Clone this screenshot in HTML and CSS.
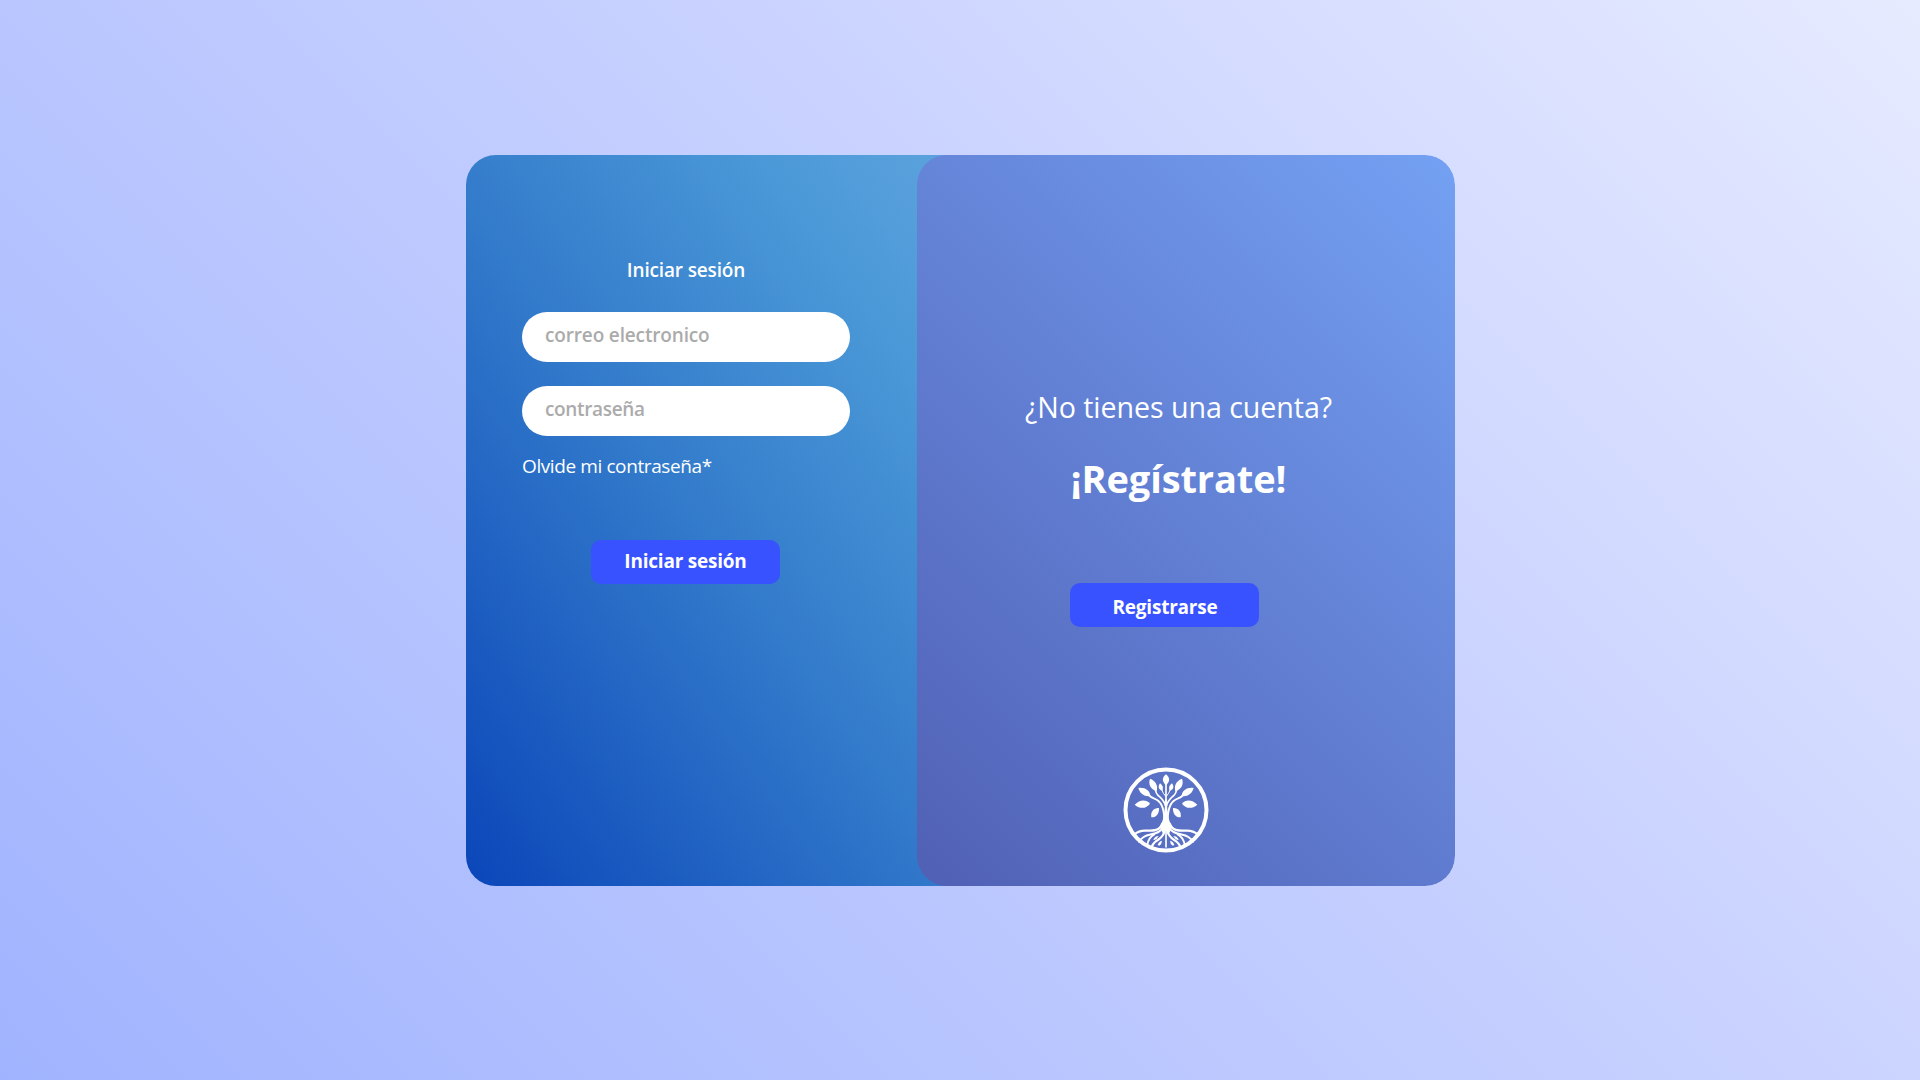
FILE: index.html
```html
<!DOCTYPE html>
<html lang="es">
<head>
<meta charset="utf-8">
<title>Iniciar sesión</title>
<link rel="stylesheet" href="styles.css">
</head>
<body>
<main class="card">
  <form class="login">
    <h1 class="login-title">Iniciar sesión</h1>
    <input class="field" type="text" placeholder="correo electronico">
    <input class="field field-password" type="text" placeholder="contraseña">
    <a class="forgot">Olvide mi contraseña*</a>
    <button class="btn btn-login" type="button">Iniciar sesión</button>
  </form>
  <section class="register">
    <p class="question">¿No tienes una cuenta?</p>
    <h2 class="headline">¡Regístrate!</h2>
    <button class="btn btn-register" type="button">Registrarse</button>
    <svg class="logo" viewBox="0 0 258 258" fill="none" stroke="#fff" stroke-linecap="round">
      <defs>
        <g id="half">
          <!-- branches -->
          <path d="M124 160C124 122 112 101 94 95Q84 92 76 83" stroke-width="6"/>
          <path d="M127 116C123 98 112 92 105 85Q99 79 97 68" stroke-width="5"/>
          <path d="M128 88Q120 80 116 68" stroke-width="3"/>
          <!-- leaves -->
          <g fill="#fff" stroke="none">
            <path d="M81 110C70 96 50 97 35 113C52 127 70 125 81 110Z"/>
            <path d="M82 87C81 69 64 60 46 63C51 81 66 90 82 87Z"/>
            <path d="M101 72C106 55 97 41 81 35C75 51 83 68 101 72Z"/>
            <path d="M118 72C122 61 118 54 111 49C104 58 106 68 118 72Z"/>
            <path d="M108 123C92 122 82 134 85 151C100 152 109 140 108 123Z"/>
          </g>
          <!-- roots -->
          <path d="M118 170C110 193 88 191 66 191Q47 191 33 203" stroke-width="7"/>
          <path d="M120 181C108 205 78 198 62 210Q53 216 48 224" stroke-width="6"/>
          <path d="M94 202C82 208 75 218 72 236" stroke-width="5.5"/>
          <path d="M125 190C121 214 106 216 96 225Q90 230 86 240" stroke-width="6.5"/>
          <path d="M91 218Q95 208 107 207Q103 216 94 219Z" fill="#fff" stroke="none"/>
          <path d="M104 234Q107 223 117 221Q117 230 109 236Z" fill="#fff" stroke="none"/>
        </g>
      </defs>
      <circle cx="129" cy="129" r="121.500" stroke-width="12"/>
      <path d="M129 50V240" stroke-width="5"/>
      <path d="M127 96H131C133 135 135 161 148 178L138 200Q131 196 129 186Q127 196 120 200L110 178C123 161 125 135 127 96Z" fill="#fff" stroke="none"/>
      <path d="M129 55C116 43 117 32 129 22C141 32 142 43 129 55Z" fill="#fff" stroke="none"/>
      <use href="#half"/>
      <use href="#half" transform="matrix(-1 0 0 1 258 0)"/>
    </svg>
  </section>
</main>
</body>
</html>
```

FILE: styles.css
```css
* {
  box-sizing: border-box;
  margin: 0;
}

body {
  height: 100vh;
  padding: 155px 0 0 466px;
  font-family: "Segoe UI", "Open Sans", "Noto Sans", sans-serif;
  color: #fff;
  background: linear-gradient(45deg, #a0b3fe, #cbd4ff 63%, #e6ebff);
}

.card {
  display: flex;
  justify-content: space-between;
  width: 989px;
  height: 731px;
  border-radius: 30px;
  overflow: hidden;
  background: linear-gradient(to top right, #0b46b9, #337bcb 47%, #4a98d7 77%, #60a5df) left / 530px 100% no-repeat;
}

.login {
  display: flex;
  flex-direction: column;
  width: 440px;
  padding: 102px 56px 0;
}

.login-title {
  align-self: center;
  font-size: 19px;
  font-weight: 600;
  line-height: 26px;
  letter-spacing: -0.15px;
}

.field {
  height: 50px;
  margin-top: 29px;
  padding: 10px 23px 14px;
  border: 0;
  border-radius: 25px;
  background: #fff;
  font: 600 19px/26px "Segoe UI", "Open Sans", "Noto Sans", sans-serif;
  letter-spacing: -0.15px;
}

.field-password {
  margin-top: 24px;
  letter-spacing: -0.35px;
}

.field::placeholder {
  color: #ababab;
}

.forgot {
  margin-top: 17px;
  font-size: 19px;
  line-height: 26px;
  letter-spacing: -0.4px;
}

.btn {
  width: 189px;
  height: 44px;
  border: 0;
  border-radius: 10px;
  background: #3852ff;
  color: #fff;
  font: 700 19px/26px "Segoe UI", "Open Sans", "Noto Sans", sans-serif;
  letter-spacing: -0.22px;
}

.btn-login {
  align-self: center;
  margin: 61px 1px 0 0;
  padding: 8px 0 10px;
}

.register {
  display: flex;
  flex-direction: column;
  align-items: center;
  width: 538px;
  padding: 232px 41px 0 0;
  border-radius: 30px;
  background: linear-gradient(45deg, #5060b4, #6280d4 50%, #74a1f3);
}

.question {
  margin-left: 26px;
  font-size: 28.6px;
  line-height: 39px;
  letter-spacing: -0.05px;
}

.headline {
  margin: 26px 0 0 26px;
  font-size: 38px;
  font-weight: 700;
  line-height: 52px;
  letter-spacing: -0.1px;
}

.btn-register {
  margin: 79px 2px 0 0;
  padding: 11px 0 7px 1px;
}

.logo {
  flex: none;
  width: 86px;
  height: 86px;
  margin-top: 140px;
}
```
